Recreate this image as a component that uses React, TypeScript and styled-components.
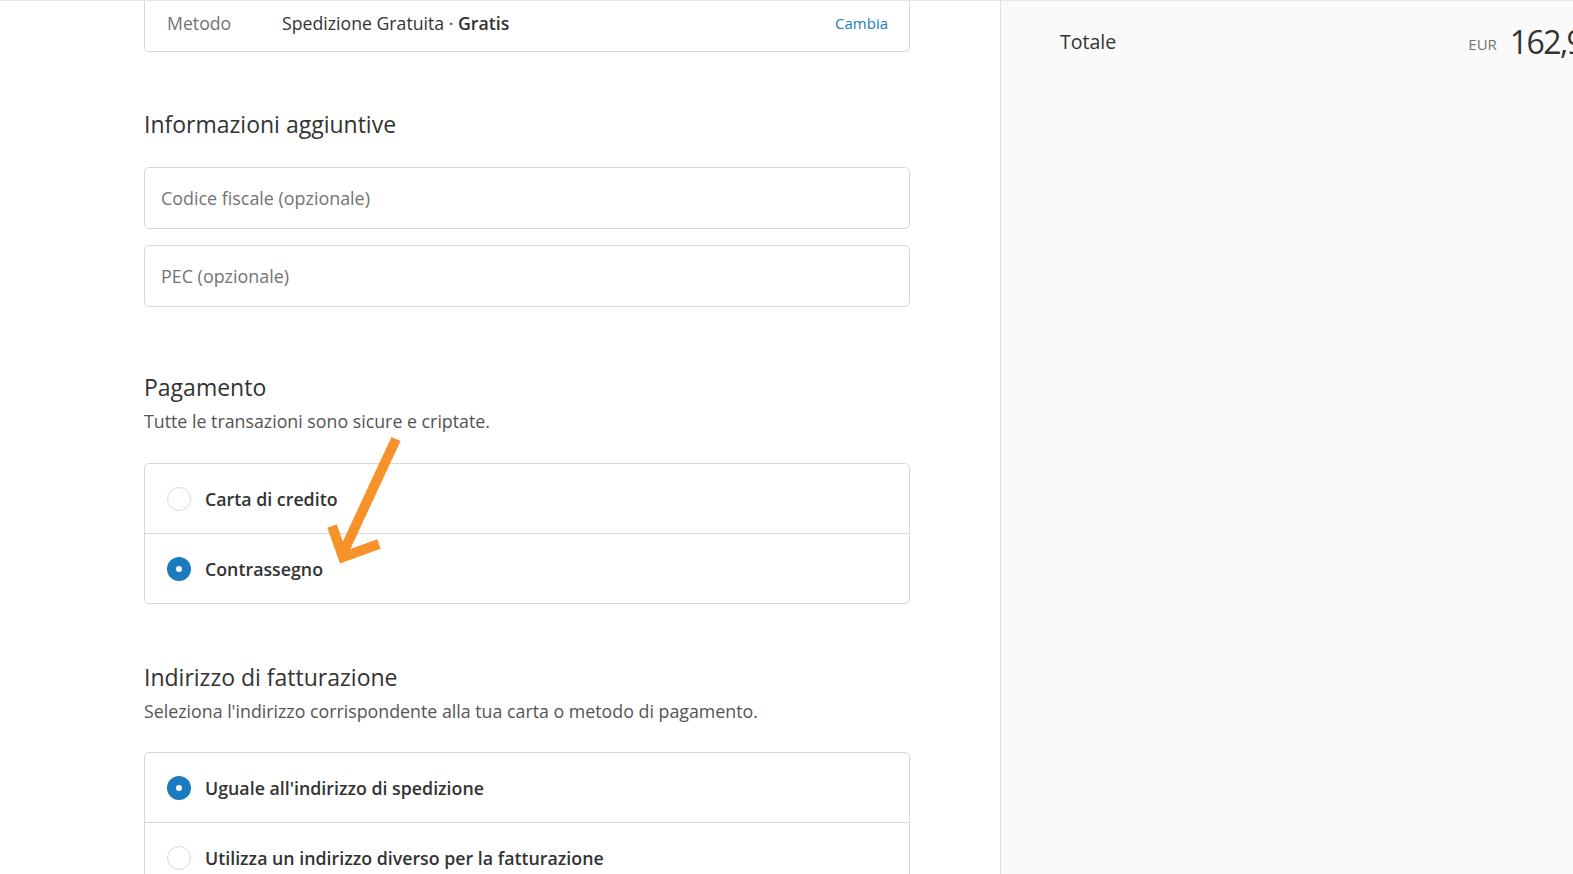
import React from "react";
import styled, { createGlobalStyle } from "styled-components";

const Global = createGlobalStyle`
  html, body { margin: 0; padding: 0; background: #fff; overflow: hidden; }
  body { font-family: "Open Sans", "Noto Sans", sans-serif; color: #333; }
`;

const Page = styled.div`
  display: flex;
  width: 1573px;
  height: 874px;
  border-top: 1px solid #e6e6e6;
  box-sizing: border-box;
  overflow: hidden;
`;

const Main = styled.main`
  position: relative;
  width: 1001px;
  flex: none;
  padding-left: 144px;
  box-sizing: border-box;
  border-right: 1px solid #e1e1e1;
`;

const Column = styled.div`
  width: 766px;
  display: flex;
  flex-direction: column;
`;

const ShipCard = styled.div`
  display: flex;
  align-items: center;
  height: 51px;
  padding: 0 21px 6px 22px;
  box-sizing: border-box;
  border: 1px solid #d9d9d9;
  border-top: none;
  border-radius: 0 0 5px 5px;
  font-size: 17.7px;
`;

const ShipLabel = styled.span`
  color: #737373;
  width: 115px;
  flex: none;
`;

const ShipValue = styled.span`
  flex: 1;
  color: #333;
  b { font-weight: 600; }
`;

const Link = styled.a`
  color: #197bbd;
  font-size: 15px;
  text-decoration: none;
`;

const Section = styled.section<{ $top: number }>`
  margin-top: ${(p) => p.$top}px;
  display: flex;
  flex-direction: column;
`;

const Heading = styled.h2`
  margin: 0;
  font-size: 23px;
  font-weight: 400;
  color: #333;
  line-height: 30px;
`;

const Sub = styled.p`
  margin: 7px 0 0;
  font-size: 17.8px;
  color: #545454;
  line-height: 24px;
`;

const Field = styled.div`
  height: 62px;
  border: 1px solid #d9d9d9;
  border-radius: 5px;
  box-sizing: border-box;
  display: flex;
  align-items: center;
  padding: 0 16px;
  font-size: 17.9px;
  color: #737373;
`;

const Fields = styled.div`
  margin-top: 28px;
  display: flex;
  flex-direction: column;
  gap: 16px;
`;

const RadioBox = styled.div<{ $top: number }>`
  margin-top: ${(p) => p.$top}px;
  border: 1px solid #d9d9d9;
  border-radius: 5px;
  display: flex;
  flex-direction: column;
`;

const RadioRow = styled.label`
  height: 69px;
  display: flex;
  align-items: center;
  padding: 0 21px 0 22px;
  gap: 14px;
  & + & { border-top: 1px solid #d9d9d9; }
  font-size: 17.8px;
  font-weight: 600;
  color: #333;
`;

const Radio = styled.span<{ $on?: boolean }>`
  width: 24px;
  height: 24px;
  border-radius: 50%;
  box-sizing: border-box;
  flex: none;
  position: relative;
  background: ${(p) => (p.$on ? "#1a7bbe" : "#fff")};
  border: ${(p) => (p.$on ? "none" : "1px solid #d9d9d9")};
  &::after {
    content: "";
    display: ${(p) => (p.$on ? "block" : "none")};
    position: absolute;
    left: 9px;
    top: 9px;
    width: 6px;
    height: 6px;
    border-radius: 50%;
    background: #fff;
  }
`;

const Arrow = styled.svg`
  position: absolute;
  left: 320px;
  top: 430px;
  width: 100px;
  height: 140px;
  pointer-events: none;
`;

const Aside = styled.aside`
  flex: 1;
  background: #fafafa;
  padding: 19px 0 0 59px;
  min-width: 0;
`;

const TotalRow = styled.div`
  width: 540px;
  display: flex;
  align-items: center;
  justify-content: space-between;
`;

const TotalLabel = styled.span`
  font-size: 19.5px;
  color: #333;
`;

const Price = styled.span`
  display: flex;
  align-items: center;
  gap: 13px;
`;

const Currency = styled.span`
  font-size: 15px;
  color: #737373;
  margin-top: 5px;
`;

const Amount = styled.span`
  font-size: 32px;
  color: #333;
  letter-spacing: -1.6px;
`;

export default function App() {
  return (
    <>
      <Global />
      <Page>
        <Main>
          <Column>
            <ShipCard>
              <ShipLabel>Metodo</ShipLabel>
              <ShipValue>
                Spedizione Gratuita · <b>Gratis</b>
              </ShipValue>
              <Link href="#">Cambia</Link>
            </ShipCard>

            <Section $top={57}>
              <Heading>Informazioni aggiuntive</Heading>
              <Fields>
                <Field>Codice fiscale (opzionale)</Field>
                <Field>PEC (opzionale)</Field>
              </Fields>
            </Section>

            <Section $top={65}>
              <Heading>Pagamento</Heading>
              <Sub>Tutte le transazioni sono sicure e criptate.</Sub>
              <RadioBox $top={30}>
                <RadioRow>
                  <Radio />
                  Carta di credito
                </RadioRow>
                <RadioRow>
                  <Radio $on />
                  Contrassegno
                </RadioRow>
              </RadioBox>
            </Section>

            <Section $top={58}>
              <Heading>Indirizzo di fatturazione</Heading>
              <Sub>Seleziona l'indirizzo corrispondente alla tua carta o metodo di pagamento.</Sub>
              <RadioBox $top={29}>
                <RadioRow>
                  <Radio $on />
                  Uguale all'indirizzo di spedizione
                </RadioRow>
                <RadioRow>
                  <Radio />
                  Utilizza un indirizzo diverso per la fatturazione
                </RadioRow>
              </RadioBox>
            </Section>
          </Column>
          <Arrow viewBox="0 0 100 140">
            <g stroke="#f7922a" strokeWidth="10" fill="none" strokeLinejoin="miter" strokeLinecap="butt">
              <line x1="76" y1="8" x2="23" y2="122" />
              <polyline points="12,95 23,126 59,113" />
            </g>
          </Arrow>
        </Main>
        <Aside>
          <TotalRow>
            <TotalLabel>Totale</TotalLabel>
            <Price>
              <Currency>EUR</Currency>
              <Amount>162,90</Amount>
            </Price>
          </TotalRow>
        </Aside>
      </Page>
    </>
  );
}
